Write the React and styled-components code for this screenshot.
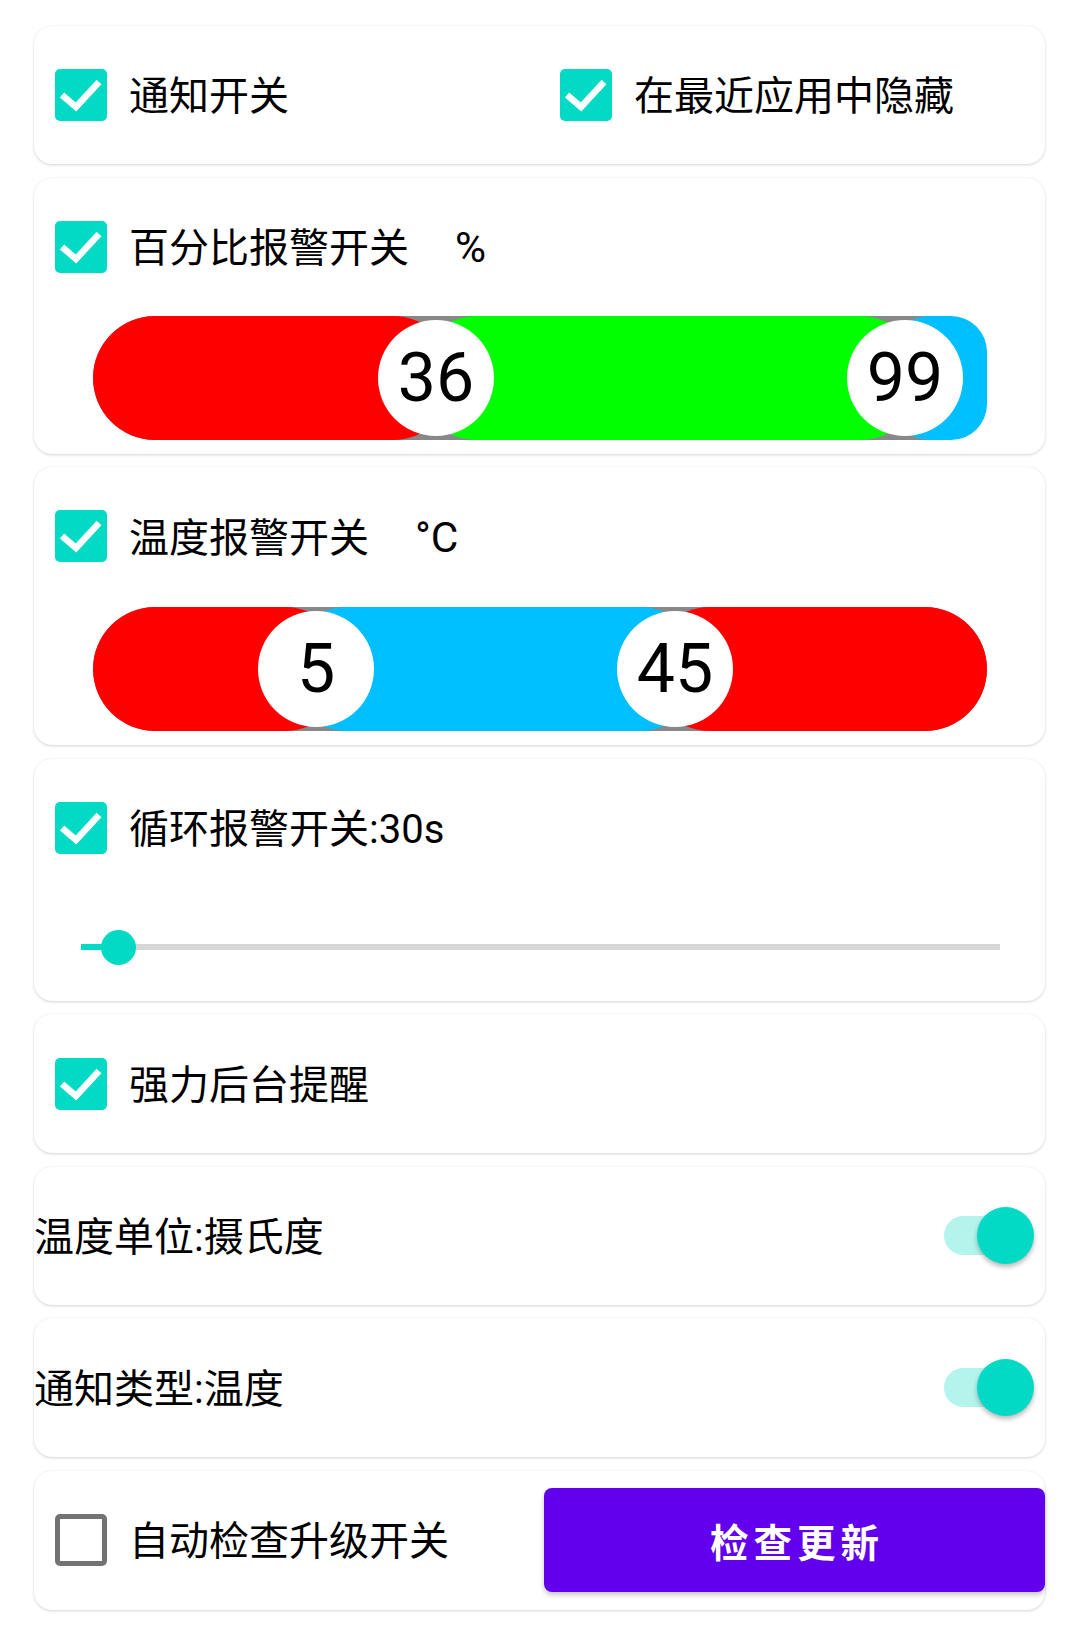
import React from 'react';
import styled, { createGlobalStyle } from 'styled-components';

const GlobalStyle = createGlobalStyle`
  body {
    margin: 0;
    background: #ffffff;
  }
`;

const TEAL = '#03DAC5';
const FONT = 'Roboto, "Noto Sans CJK SC", sans-serif';

const Page = styled.div`
  display: flex;
  flex-direction: column;
  gap: 13.5px;
  padding: 26px 35px 30px 34px;
`;

const Card = styled.div`
  display: flex;
  flex-direction: column;
  background: #ffffff;
  border-radius: 18px;
  box-shadow: 0 1px 3px rgba(0, 0, 0, 0.16), 0 0 1px rgba(0, 0, 0, 0.08);
  padding-bottom: ${(p) => p.$pb || 0}px;
`;

const Row = styled.div`
  height: ${(p) => p.$h || 138}px;
  display: flex;
  align-items: center;
  padding-right: ${(p) => p.$pr || 0}px;
`;

const CheckItem = styled.div`
  flex: ${(p) => (p.$grow ? 1 : 'none')};
  display: flex;
  align-items: center;
  gap: 22px;
  padding-left: ${(p) => p.$pl || 21}px;
`;

const Box = styled.span`
  flex: none;
  width: 52px;
  height: 52px;
  box-sizing: border-box;
  border-radius: 5px;
  display: flex;
  align-items: center;
  justify-content: center;
  background: ${(p) => (p.$on ? TEAL : 'transparent')};
  border: ${(p) => (p.$on ? 'none' : '5px solid #737373')};
`;

const Label = styled.span`
  font-family: ${FONT};
  font-size: 40px;
  line-height: 1;
  margin-top: 4px;
  color: #000000;
  white-space: nowrap;
  flex: ${(p) => (p.$grow ? 1 : 'none')};
`;

const Unit = styled.span`
  margin-left: 46px;
  font-size: 1.06em;
`;

const RangeTrack = styled.div`
  position: relative;
  height: 124px;
  margin: ${(p) => p.$mt || 0}px 58px 0 59px;
  background: #888888;
  border-radius: 62px;
`;

const Segment = styled.div`
  position: absolute;
  top: 0;
  bottom: 0;
  left: ${(p) => p.$left}px;
  width: ${(p) => p.$width}px;
  background: ${(p) => p.$color};
  border-radius: ${(p) => p.$radius || 62}px;
`;

const Knob = styled.div`
  position: absolute;
  top: 4px;
  left: ${(p) => p.$at}px;
  width: 116px;
  height: 116px;
  margin-left: -58px;
  border-radius: 50%;
  background: #ffffff;
  display: flex;
  align-items: center;
  justify-content: center;
  font-family: Roboto, sans-serif;
  font-size: 68px;
  color: #000000;
`;

const SliderArea = styled.div`
  height: 101px;
  display: flex;
  align-items: center;
  padding: 0 45px 0 47px;
`;

const SliderTrack = styled.div`
  position: relative;
  flex: 1;
  height: 6px;
  background: #d6d6d6;
`;

const SliderFill = styled.div`
  height: 100%;
  background: ${TEAL};
`;

const SliderThumb = styled.div`
  position: absolute;
  top: 50%;
  width: 35px;
  height: 35px;
  margin: -17.5px 0 0 -17.5px;
  border-radius: 50%;
  background: ${TEAL};
`;

const Switch = styled.div`
  position: relative;
  flex: none;
  width: 90px;
  height: 57px;
`;

const SwitchTrack = styled.div`
  position: absolute;
  left: 0;
  top: 9px;
  width: 81px;
  height: 39px;
  border-radius: 19.5px;
  background: ${(p) => (p.$on ? 'rgba(3, 218, 197, 0.3)' : '#bdbdbd')};
`;

const SwitchThumb = styled.div`
  position: absolute;
  top: 0;
  ${(p) => (p.$on ? 'right: 0;' : 'left: 0;')}
  width: 57px;
  height: 57px;
  border-radius: 50%;
  background: ${(p) => (p.$on ? TEAL : '#f1f1f1')};
  box-shadow: 0 3px 5px rgba(0, 0, 0, 0.28);
`;

const UpdateButton = styled.button`
  flex: none;
  width: 501px;
  height: 104px;
  border: none;
  border-radius: 8px;
  background: #6200ee;
  color: #ffffff;
  font-family: ${FONT};
  font-size: 38.5px;
  font-weight: 700;
  letter-spacing: 5px;
  padding: 0 0 0 5px;
  box-shadow: 0 3px 5px rgba(0, 0, 0, 0.22);
`;

function CheckBox({ on }) {
  return (
    <Box $on={on}>
      {on && (
        <svg width="52" height="52" viewBox="0 0 52 52">
          <polyline
            points="7,26 21,38 44,13"
            fill="none"
            stroke="#ffffff"
            strokeWidth="6.5"
          />
        </svg>
      )}
    </Box>
  );
}

function Toggle({ on }) {
  return (
    <Switch>
      <SwitchTrack $on={on} />
      <SwitchThumb $on={on} />
    </Switch>
  );
}

// bar is 894px wide; positions are px from its left edge
const percentBar = {
  segments: [
    { left: 0, width: 362, color: '#ff0000' },
    { left: 322, width: 507, color: '#00ff00' },
    { left: 800, width: 94, color: '#00bfff', radius: 36 },
  ],
  knobs: [
    { at: 343, value: 36 },
    { at: 812, value: 99 },
  ],
};

const tempBar = {
  segments: [
    { left: 0, width: 254, color: '#ff0000' },
    { left: 555, width: 339, color: '#ff0000' },
    { left: 192, width: 417, color: '#00bfff' },
  ],
  knobs: [
    { at: 223, value: 5 },
    { at: 582, value: 45 },
  ],
};

function RangeBar({ data, mt }) {
  return (
    <RangeTrack $mt={mt}>
      {data.segments.map((s, i) => (
        <Segment key={i} $left={s.left} $width={s.width} $color={s.color} $radius={s.radius} />
      ))}
      {data.knobs.map((k) => (
        <Knob key={k.value} $at={k.at}>
          {k.value}
        </Knob>
      ))}
    </RangeTrack>
  );
}

export default function App() {
  const loop = 37.5;
  return (
    <>
      <GlobalStyle />
      <Page>
        <Card>
          <Row>
            <CheckItem $grow>
              <CheckBox on />
              <Label>通知开关</Label>
            </CheckItem>
            <CheckItem $grow $pl={20}>
              <CheckBox on />
              <Label>在最近应用中隐藏</Label>
            </CheckItem>
          </Row>
        </Card>

        <Card $pb={14}>
          <Row>
            <CheckItem>
              <CheckBox on />
              <Label>
                百分比报警开关<Unit>%</Unit>
              </Label>
            </CheckItem>
          </Row>
          <RangeBar data={percentBar} />
        </Card>

        <Card $pb={14}>
          <Row>
            <CheckItem>
              <CheckBox on />
              <Label>
                温度报警开关<Unit>°C</Unit>
              </Label>
            </CheckItem>
          </Row>
          <RangeBar data={tempBar} mt={2} />
        </Card>

        <Card $pb={3}>
          <Row>
            <CheckItem>
              <CheckBox on />
              <Label>循环报警开关:30s</Label>
            </CheckItem>
          </Row>
          <SliderArea>
            <SliderTrack>
              <SliderFill style={{ width: loop }} />
              <SliderThumb style={{ left: loop }} />
            </SliderTrack>
          </SliderArea>
        </Card>

        <Card>
          <Row $h={139}>
            <CheckItem>
              <CheckBox on />
              <Label>强力后台提醒</Label>
            </CheckItem>
          </Row>
        </Card>

        <Card>
          <Row $pr={11}>
            <Label $grow>温度单位:摄氏度</Label>
            <Toggle on />
          </Row>
        </Card>

        <Card>
          <Row $h={139} $pr={11}>
            <Label $grow>通知类型:温度</Label>
            <Toggle on />
          </Row>
        </Card>

        <Card>
          <Row $h={139}>
            <CheckItem $grow>
              <CheckBox />
              <Label>自动检查升级开关</Label>
            </CheckItem>
            <UpdateButton>检查更新</UpdateButton>
          </Row>
        </Card>
      </Page>
    </>
  );
}
